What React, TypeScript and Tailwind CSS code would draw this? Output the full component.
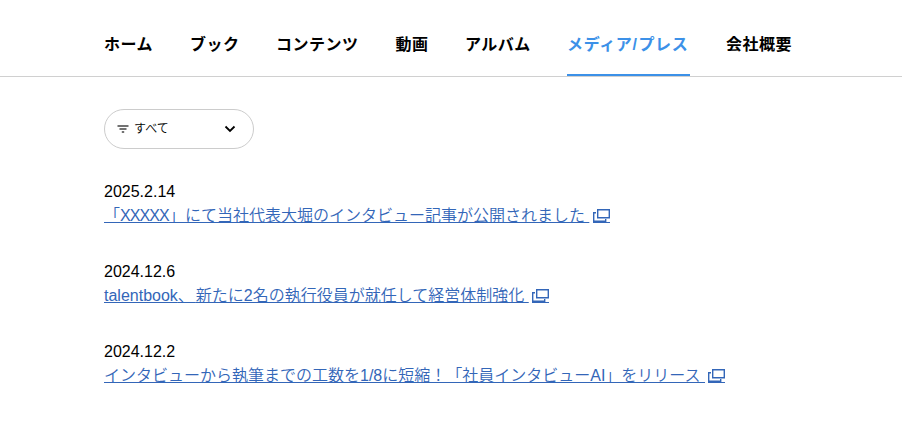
import type { ReactNode } from 'react';

const font = "font-['Liberation_Sans','Noto_Sans_CJK_JP',sans-serif]";

const tabs: { label: ReactNode; cls: string; active?: boolean }[] = [
  { label: 'ホーム', cls: 'w-[49.5px]' },
  { label: 'ブック', cls: 'w-[49.5px]' },
  { label: 'コンテンツ', cls: 'w-[83px]' },
  { label: '動画', cls: 'w-[33px]' },
  { label: 'アルバム', cls: 'w-[65.5px]' },
  { label: <>メディア<span className="tracking-[1.5px]">/</span>プレス</>, cls: 'w-[123px] tracking-[0.65px]', active: true },
  { label: '会社概要', cls: 'w-[66px] -ml-[0.5px] tracking-[0.5px]' },
];

const items: { date: string; title: ReactNode; cls: string }[] = [
  { date: '2025.2.14', title: <>「<span className="tracking-[-0.9px]">XXXXX</span>」にて当社代表大堀のインタビュー記事が公開されました </>, cls: 'w-[485px]' },
  { date: '2024.12.6', title: <>talentbook<span className="tracking-[2px]">、</span>新たに2名の執行役員が就任して経営体制強化 </>, cls: 'w-[424px]' },
  { date: '2024.12.2', title: <>インタビューから執筆までの工数を1/8に短縮！「社員インタビューAI」をリリース </>, cls: 'w-[600px]' },
];

function WindowIcon() {
  return (
    <svg className="ml-1 mt-1 h-[16px] w-[18px] shrink-0" viewBox="0 0 18 16" fill="none" stroke="#3366b8" strokeWidth="1.4">
      <path d="M4.7 1.7H16.3V9.7H4.7Z" />
      <path d="M3 4.7H.7V13.3H12.7V11" />
      <path d="M0 14.5H17" strokeWidth="1" />
    </svg>
  );
}

export default function App() {
  return (
    <div className={`h-[429px] bg-white text-black ${font}`}>
      <nav className="flex h-[77px] gap-[36.5px] border-b border-[#d0d0d0] pl-[104px] tracking-[0.5px]">
        {tabs.map((t, i) => (
          <a key={i} className={`h-[76px] shrink-0 whitespace-nowrap pt-[33px] text-base font-bold leading-6 ${t.cls} ${t.active ? 'border-b-2 border-[#3c91e8] text-[#3c91e8]' : ''}`}>
            {t.label}
          </a>
        ))}
      </nav>
      <main className="pl-[104px] pt-8">
        <button className="flex h-10 w-[150px] items-center rounded-full border border-[#ccc] pl-3 pr-[17px] text-xs font-[350]">
          <svg className="mr-[5px] h-3 w-3" viewBox="0 0 12 12" stroke="#444" strokeWidth="1.4"><path d="M.5 3h11M2.5 6h7M4.8 9h2.4" /></svg>
          <span>すべて</span>
          <svg className="ml-auto h-3 w-3" viewBox="0 0 12 12" fill="none" stroke="#000" strokeWidth="1.8"><path d="M1.5 3.5L6 8L10.5 3.5" /></svg>
        </button>
        <ul className="mt-[31px] flex flex-col gap-8">
          {items.map((it) => (
            <li key={it.date} className="h-12 text-base leading-6">
              <time className="block h-6">{it.date}</time>
              <a className="flex h-6 text-[#3366b8]">
                <span className={`whitespace-pre font-[350] underline ${it.cls}`}>{it.title}</span>
                <WindowIcon />
              </a>
            </li>
          ))}
        </ul>
      </main>
    </div>
  );
}
